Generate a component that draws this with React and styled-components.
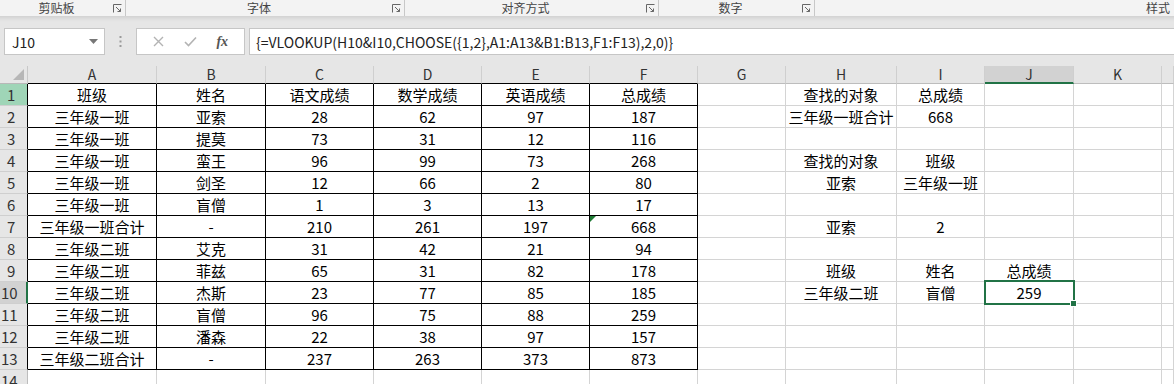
import React from 'react';
import styled, { createGlobalStyle, css } from 'styled-components';

const GlobalStyle = createGlobalStyle`
  html, body { margin: 0; padding: 0; background: #e6e6e6; overflow: hidden; }
  body { font-family: "Noto Sans CJK SC", "Noto Sans", sans-serif; }
`;

const COLS = [129, 109, 108, 108, 108, 108, 88, 111, 88, 89, 88];
const LETTERS = ['A', 'B', 'C', 'D', 'E', 'F', 'G', 'H', 'I', 'J', 'K', ''];
const TEMPLATE = `28px ${COLS.map((w) => w + 'px').join(' ')} 1fr`;

const DATA = [
  ['班级', '姓名', '语文成绩', '数学成绩', '英语成绩', '总成绩', '', '查找的对象', '总成绩'],
  ['三年级一班', '亚索', '28', '62', '97', '187', '', '三年级一班合计', '668'],
  ['三年级一班', '提莫', '73', '31', '12', '116'],
  ['三年级一班', '蛮王', '96', '99', '73', '268', '', '查找的对象', '班级'],
  ['三年级一班', '剑圣', '12', '66', '2', '80', '', '亚索', '三年级一班'],
  ['三年级一班', '盲僧', '1', '3', '13', '17'],
  ['三年级一班合计', '-', '210', '261', '197', '668', '', '亚索', '2'],
  ['三年级二班', '艾克', '31', '42', '21', '94'],
  ['三年级二班', '菲兹', '65', '31', '82', '178', '', '班级', '姓名', '总成绩'],
  ['三年级二班', '杰斯', '23', '77', '85', '185', '', '三年级二班', '盲僧', '259'],
  ['三年级二班', '盲僧', '96', '75', '88', '259'],
  ['三年级二班', '潘森', '22', '38', '97', '157'],
  ['三年级二班合计', '-', '237', '263', '373', '873'],
  [],
];

const Page = styled.div`
  width: 1174px;
  height: 384px;
  overflow: hidden;
  background: #e6e6e6;
`;

const Ribbon = styled.div`
  display: flex;
  height: 16px;
  background: #f3f3f3;
  font-size: 12px;
  color: #444;
`;

const Group = styled.div`
  display: flex;
  align-items: center;
  height: 16px;
  width: ${(p) => (p.$w ? p.$w + 'px' : 'auto')};
  flex: ${(p) => (p.$w ? 'none' : '1')};
  border-right: ${(p) => (p.$last ? 'none' : '1px solid #c8c8c8')};
  padding-right: ${(p) => (p.$last ? '4px' : '3px')};
  box-sizing: border-box;
`;

const GroupLabel = styled.span`
  flex: 1;
  text-align: ${(p) => (p.$right ? 'right' : 'center')};
  white-space: nowrap;
  line-height: 16px;
`;

const Shade = styled.div`
  height: 12px;
  background: linear-gradient(#d2d2d2 0px, #e2e2e2 4px, #e6e6e6 6px);
`;

const FormulaRow = styled.div`
  display: flex;
  align-items: stretch;
  height: 27px;
`;

const NameBox = styled.div`
  display: flex;
  align-items: center;
  justify-content: space-between;
  margin-left: 4px;
  width: 101px;
  box-sizing: border-box;
  background: #fff;
  border: 1px solid #c6c6c6;
  padding: 0 6px 0 7px;
  font-size: 14px;
  color: #222;
`;

const Dots = styled.div`
  width: 31px;
  display: flex;
  justify-content: center;
  align-items: center;
`;

const FxButtons = styled.div`
  display: flex;
  align-items: center;
  justify-content: space-around;
  width: 109px;
  box-sizing: border-box;
  background: #fff;
  border: 1px solid #c6c6c6;
  padding: 0 6px;
`;

const Fx = styled.span`
  font-family: "Liberation Serif", serif;
  font-style: italic;
  font-size: 14px;
  color: #555;
  font-weight: bold;
`;

const FormulaInput = styled.div`
  flex: 1;
  margin-left: 4px;
  background: #fff;
  border-top: 1px solid #c6c6c6;
  border-bottom: 1px solid #c6c6c6;
  border-left: 1px solid #c6c6c6;
  display: flex;
  align-items: center;
  padding-left: 6px;
  font-size: 14px;
  color: #222;
  white-space: nowrap;
`;

const Gap = styled.div`
  height: 11px;
`;

const Row = styled.div`
  display: grid;
  grid-template-columns: ${TEMPLATE};
  grid-template-rows: ${(p) => p.$h}px;
  height: ${(p) => p.$h}px;
`;

const Corner = styled.div`
  background: #e6e6e6;
  border-right: 1px solid #c8c8c8;
  border-bottom: 1px solid #b8b8b8;
  box-sizing: border-box;
  position: relative;
  &::after {
    content: '';
    position: absolute;
    right: 3px;
    bottom: 3px;
    border-left: 11px solid transparent;
    border-bottom: 11px solid #b7b7b7;
  }
`;

const ColHead = styled.div`
  background: ${(p) => (p.$active ? '#d2d2d2' : '#e6e6e6')};
  border-right: 1px solid #cfcfcf;
  border-bottom: ${(p) =>
    p.$active ? '2px solid #217346' : `1px solid ${p.$boxed ? '#000' : '#bdbdbd'}`};
  box-sizing: border-box;
  text-align: center;
  font-size: 14px;
  line-height: 17px;
  color: #333;
`;

const RowHead = styled.div`
  background: ${(p) => (p.$green ? '#9fd5b7' : p.$active ? '#d2d2d2' : '#e6e6e6')};
  border-bottom: 1px solid #cfcfcf;
  border-right: ${(p) =>
    p.$active ? '2px solid #217346' : `1px solid ${p.$boxed ? '#000' : '#bdbdbd'}`};
  box-sizing: border-box;
  font-size: 15px;
  line-height: 21px;
  color: #333;
  padding-left: ${(p) => (p.$wide ? '1px' : '7px')};
  overflow: hidden;
`;

const Cell = styled.div`
  background: #fff;
  border-right: 1px solid ${(p) => (p.$boxed ? '#000' : '#d4d4d4')};
  border-bottom: 1px solid ${(p) => (p.$boxed ? '#000' : '#d4d4d4')};
  box-sizing: border-box;
  text-align: center;
  font-size: 15px;
  line-height: 21px;
  color: #000;
  white-space: nowrap;
  position: relative;
  ${(p) =>
    p.$flag &&
    css`
      &::before {
        content: '';
        position: absolute;
        top: 0;
        left: 0;
        border-top: 6px solid #1e7b34;
        border-right: 6px solid transparent;
      }
    `}
  ${(p) =>
    p.$selected &&
    css`
      z-index: 2;
      &::before {
        content: '';
        position: absolute;
        top: -2px;
        left: -1px;
        right: -2px;
        bottom: -2px;
        border: 2px solid #217346;
      }
      &::after {
        content: '';
        position: absolute;
        right: -4px;
        bottom: -4px;
        width: 5px;
        height: 5px;
        background: #217346;
        border: 1px solid #fff;
      }
    `}
`;

function Launcher() {
  return (
    <svg width="9" height="9" viewBox="0 0 9 9">
      <path d="M0.5 8.5V0.5H8.5" fill="none" stroke="#666" strokeWidth="1" />
      <path d="M3 3L7.5 7.5M4.5 7.5H7.5V4.5" fill="none" stroke="#666" strokeWidth="1" />
    </svg>
  );
}

export default function App() {
  const rows = DATA.map((r, i) => {
    const n = i + 1;
    const inTable = n <= 13;
    return (
      <Row key={n} $h={22}>
        <RowHead $boxed={inTable} $green={n === 1} $active={n === 10} $wide={n >= 10}>
          {n}
        </RowHead>
        {LETTERS.map((l, c) => (
          <Cell
            key={l + c}
            $boxed={inTable && c < 6}
            $flag={n === 7 && c === 5}
            $selected={n === 10 && c === 9}
          >
            {r[c] || ''}
          </Cell>
        ))}
      </Row>
    );
  });

  return (
    <Page>
      <GlobalStyle />
      <Ribbon>
        <Group $w={126}>
          <GroupLabel>剪贴板</GroupLabel>
          <Launcher />
        </Group>
        <Group $w={279}>
          <GroupLabel>字体</GroupLabel>
          <Launcher />
        </Group>
        <Group $w={254}>
          <GroupLabel>对齐方式</GroupLabel>
          <Launcher />
        </Group>
        <Group $w={156}>
          <GroupLabel>数字</GroupLabel>
          <Launcher />
        </Group>
        <Group $last>
          <GroupLabel $right>样式</GroupLabel>
        </Group>
      </Ribbon>
      <Shade />
      <FormulaRow>
        <NameBox>
          <span>J10</span>
          <svg width="9" height="5" viewBox="0 0 9 5">
            <path d="M0 0H9L4.5 5Z" fill="#777" />
          </svg>
        </NameBox>
        <Dots>
          <svg width="3" height="11" viewBox="0 0 3 11">
            <rect x="0.5" y="0" width="2" height="2" fill="#9a9a9a" />
            <rect x="0.5" y="4.5" width="2" height="2" fill="#9a9a9a" />
            <rect x="0.5" y="9" width="2" height="2" fill="#9a9a9a" />
          </svg>
        </Dots>
        <FxButtons>
          <svg width="11" height="11" viewBox="0 0 11 11">
            <path d="M1 1L10 10M10 1L1 10" stroke="#b3b3b3" strokeWidth="1.4" fill="none" />
          </svg>
          <svg width="13" height="11" viewBox="0 0 13 11">
            <path d="M1 6L4.5 9.5L12 1.5" stroke="#b3b3b3" strokeWidth="1.6" fill="none" />
          </svg>
          <Fx>fx</Fx>
        </FxButtons>
        <FormulaInput>{'{=VLOOKUP(H10&I10,CHOOSE({1,2},A1:A13&B1:B13,F1:F13),2,0)}'}</FormulaInput>
      </FormulaRow>
      <Gap />
      <Row $h={18}>
        <Corner />
        {LETTERS.map((l, c) => (
          <ColHead key={l + c} $boxed={c < 6} $active={l === 'J'}>
            {l}
          </ColHead>
        ))}
      </Row>
      {rows}
    </Page>
  );
}
